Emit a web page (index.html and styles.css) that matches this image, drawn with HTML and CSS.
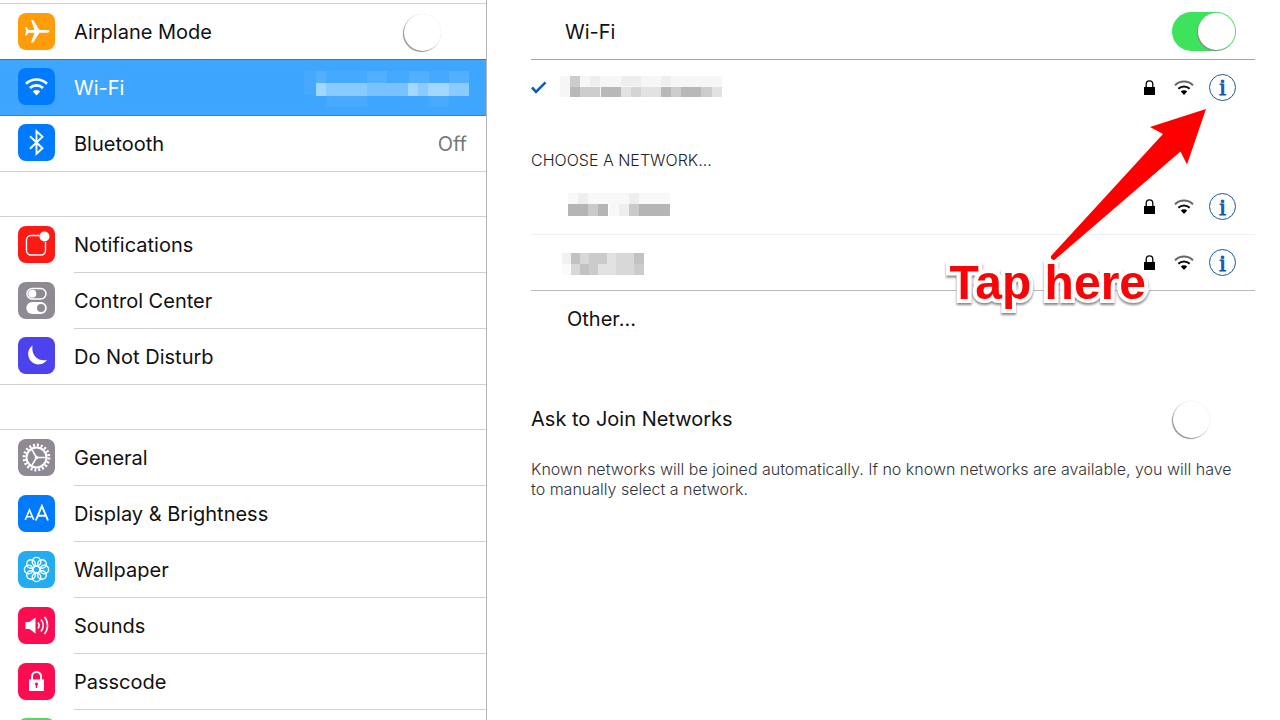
FILE: index.html
```html
<!DOCTYPE html>
<html lang="en">
<head>
<meta charset="utf-8">
<title>Settings</title>
<link rel="stylesheet" href="styles.css">
</head>
<body>
<div class="settings">
  <nav class="sidebar" aria-label="Settings">
    <div class="group">
      <div class="item">
        <svg class="icon orange" viewBox="0 0 37 37" aria-hidden="true"><path fill="#fff" d="M31.500 18.300c0 .9-1 1.400-2.500 1.400h-7.500l-6.300 9.800h-2.100l3.300-9.800h-5.700l-2.300 2.800H7.200l1-4.200-1-4.200h1.200l2.300 2.800h5.700l-3.300-9.800h2.100l6.300 9.800H29c1.500 0 2.500.5 2.500 1.400z"/></svg>
        <div class="item-body"><label for="airplane">Airplane Mode</label><input class="switch" type="checkbox" id="airplane"></div>
      </div>
      <a class="item selected" href="#wifi">
        <svg class="icon blue" viewBox="0 0 37 37" aria-hidden="true"><g fill="none" stroke="#fff" stroke-width="2.600"><path d="M8 15.800a15 15 0 0 1 21 0"/><path d="M12 20a9.300 9.300 0 0 1 13 0"/></g><path fill="#fff" d="M18.500 27.500l-3.700-4.100a5.400 5.400 0 0 1 7.400 0z"/></svg>
        <span class="item-body">Wi-Fi
          <svg class="mosaic-side" viewBox="0 0 165 40" aria-hidden="true"><path fill="#4eafff" d="M0 3h165v24H0z" opacity=".4"/><path fill="#61b8ff" d="M12 3h10v12H12zM63 3h20v12H63zM105 3h20v12h-20zM145 3h20v12h-20z" opacity=".5"/><path fill="#50adff" d="M22 27h41v12H22zM125 27h20v12h-20z" opacity=".6"/><path fill="#89cbff" d="M12 15h153v13H12z"/><path fill="#a2d7ff" d="M12 15h10v13H12zM104 15h10v13h-10zM124 15h21v13h-21z"/><path fill="#78c2ff" d="M63 15h41v13H63z"/></svg>
        </span>
      </a>
      <a class="item" href="#bluetooth">
        <svg class="icon blue" viewBox="0 0 37 37" aria-hidden="true"><path fill="none" stroke="#fff" stroke-width="1.900" d="M12 12.200l12.500 12.100-6 5.500V7.200l6 5.500L12 24.800"/></svg>
        <span class="item-body">Bluetooth<span class="value">Off</span></span>
      </a>
    </div>
    <div class="group">
      <a class="item" href="#notifications">
        <svg class="icon red" viewBox="0 0 37 37" aria-hidden="true"><path fill="none" stroke="#fff" stroke-width="1.400" d="M21.500 9.500H13a4.500 4.500 0 0 0-4.500 4.500V24.500A4.500 4.500 0 0 0 13 29h10a4.500 4.500 0 0 0 4.500-4.500V16"/><circle cx="26.500" cy="10.500" r="5" fill="#fff"/></svg>
        <span class="item-body">Notifications</span>
      </a>
      <a class="item" href="#control">
        <svg class="icon gray" viewBox="0 0 37 37" aria-hidden="true"><rect x="9" y="6.500" width="19" height="10.500" rx="5.250" fill="none" stroke="#fff" stroke-width="1.500"/><circle cx="14.300" cy="11.700" r="4" fill="#fff"/><rect x="8.300" y="20" width="20.500" height="12" rx="6" fill="#fff"/><circle cx="23" cy="26" r="4" fill="#8e8992"/></svg>
        <span class="item-body">Control Center</span>
      </a>
      <a class="item" href="#dnd">
        <svg class="icon indigo" viewBox="0 0 37 37" aria-hidden="true"><path fill="#fff" d="M14.500 8.500c-1.500 9 5 16.500 14.500 14.500A10.400 10.400 0 1 1 14.500 8.500z"/></svg>
        <span class="item-body">Do Not Disturb</span>
      </a>
    </div>
    <div class="group">
      <a class="item" href="#general">
        <svg class="icon gray" viewBox="0 0 37 37" aria-hidden="true"><g fill="none" stroke="#fff"><circle cx="18.500" cy="18.500" r="10" stroke-width="2"/><circle cx="18.500" cy="18.500" r="12.400" stroke-width="3" stroke-dasharray="2 1.895"/><path stroke-width="1.600" d="M18.500 18.500h10M18.500 18.500l-5-8.600M18.500 18.500l-5 8.600"/></g><circle cx="18.500" cy="18.500" r="1.800" fill="#fff"/></svg>
        <span class="item-body">General</span>
      </a>
      <a class="item" href="#display">
        <svg class="icon blue" viewBox="0 0 37 37" aria-hidden="true"><g fill="none" stroke="#fff" stroke-width="1.900"><path d="M7.200 25l4.300-10 4.300 10M8.700 21.700h5.600" stroke-width="1.600"/><path d="M17.800 25.500l6.100-14.500L30 25.500M20 20.800h7.800"/></g></svg>
        <span class="item-body">Display &amp; Brightness</span>
      </a>
      <a class="item" href="#wallpaper">
        <svg class="icon cyan" viewBox="0 0 37 37" aria-hidden="true"><g fill="none" stroke="#fff" stroke-width="1.400"><circle cx="18.500" cy="10.700" r="4.300"/><circle cx="24" cy="13" r="4.300"/><circle cx="26.300" cy="18.500" r="4.300"/><circle cx="24" cy="24" r="4.300"/><circle cx="18.500" cy="26.300" r="4.300"/><circle cx="13" cy="24" r="4.300"/><circle cx="10.700" cy="18.500" r="4.300"/><circle cx="13" cy="13" r="4.300"/><circle cx="18.500" cy="18.500" r="3.400"/></g></svg>
        <span class="item-body">Wallpaper</span>
      </a>
      <a class="item" href="#sounds">
        <svg class="icon pink" viewBox="0 0 37 37" aria-hidden="true"><path fill="#fff" d="M7.500 15h4l6-4.500v16l-6-4.500h-4z"/><g fill="none" stroke="#fff" stroke-width="1.600"><path d="M20 15.500a5 5 0 0 1 0 6"/><path d="M23 12.500a9.300 9.300 0 0 1 0 12"/><path d="M26.500 10a13.500 13.500 0 0 1 0 17"/></g></svg>
        <span class="item-body">Sounds</span>
      </a>
      <a class="item" href="#passcode">
        <svg class="icon pink" viewBox="0 0 37 37" aria-hidden="true"><path fill="#fff" fill-rule="evenodd" d="M11 16.500h15V28H11zM18.500 19.500a1.600 1.600 0 0 0-.7 3V25h1.400v-2.500a1.600 1.600 0 0 0-.7-3z"/><path fill="none" stroke="#fff" stroke-width="2" d="M14 17v-3.500a4.500 4.500 0 0 1 9 0V17"/></svg>
        <span class="item-body">Passcode</span>
      </a>
      <a class="item" href="#more" aria-label="More">
        <svg class="icon green" viewBox="0 0 37 37" aria-hidden="true"></svg>
        <span class="item-body"></span>
      </a>
    </div>
  </nav>

  <main class="detail" id="wifi">
    <div class="row power"><label for="wifi-power">Wi-Fi</label><input class="switch" type="checkbox" id="wifi-power" checked></div>
    <div class="row current">
      <svg class="check" viewBox="0 0 16 13" aria-hidden="true"><path fill="none" stroke="#0c5cb5" stroke-width="2.600" d="M1 6.500l4 4.300L14.500 1.300"/></svg>
      <svg class="mosaic" viewBox="0 0 164 28" aria-hidden="true"><path fill="#f6f6f6" d="M0 3h162v21H0z"/><path fill="#eee" d="M30 3h10v10H30zM61 3h20v10H61zM101 3h10v10h-10z"/><path fill="#ccc" d="M10 3h10v21H10zM20 14h20v10H20zM91 14h71v10H91z"/><path fill="#b8b8b8" d="M10 14h10v10H10zM41 14h20v10H41zM101 14h10v10h-10zM121 14h20v10h-20z"/><path fill="#e2e2e2" d="M61 14h10v10H61zM81 14h20v10H81zM152 14h10v10h-10z"/><path fill="#d4d4d4" d="M71 14h10v10H71z"/></svg>
      <svg class="lock" viewBox="0 0 11 15" aria-hidden="true"><path d="M0 7h11v8H0z"/><path fill="none" stroke="#000" stroke-width="1.300" d="M2.200 7V4.200a3.300 3.300 0 0 1 6.600 0V7"/></svg>
      <svg class="signal" viewBox="0 0 20 15" aria-hidden="true"><g fill="none" stroke-width="2"><path stroke="#666" d="M1 5.200a13 13 0 0 1 18 0"/><path stroke="#111" d="M4.300 8.700a8.200 8.200 0 0 1 11.400 0"/></g><path d="M10 15l-3.200-3.500a4.600 4.600 0 0 1 6.400 0z"/></svg>
      <button class="info" aria-label="Network details">i</button>
    </div>

    <h2 class="heading">CHOOSE A NETWORK...</h2>
    <div class="row network">
      <svg class="mosaic" viewBox="0 0 164 28" aria-hidden="true"><path fill="#f8f8f8" d="M9 0h102v11H9zM50 11h20v12H50z"/><path fill="#eee" d="M19 0h10v11H19zM70 0h10v11H70zM60 11h10v12H60z"/><path fill="#b5b5b5" d="M9 11h20v12H9zM39 11h10v12H39zM80 11h31v12H80z"/><path fill="#cacaca" d="M29 11h10v12H29zM70 11h10v12H70z"/></svg>
      <svg class="lock" viewBox="0 0 11 15" aria-hidden="true"><path d="M0 7h11v8H0z"/><path fill="none" stroke="#000" stroke-width="1.300" d="M2.200 7V4.200a3.300 3.300 0 0 1 6.600 0V7"/></svg>
      <svg class="signal" viewBox="0 0 20 15" aria-hidden="true"><g fill="none" stroke-width="2"><path stroke="#666" d="M1 5.200a13 13 0 0 1 18 0"/><path stroke="#111" d="M4.300 8.700a8.200 8.200 0 0 1 11.400 0"/></g><path d="M10 15l-3.200-3.500a4.600 4.600 0 0 1 6.400 0z"/></svg>
      <button class="info" aria-label="Network details">i</button>
    </div>
    <div class="row network ruled">
      <svg class="mosaic" viewBox="0 0 164 28" aria-hidden="true"><path fill="#f1f1f1" d="M3 4h9v11H3z"/><path fill="#fafafa" d="M3 15h9v11H3z"/><path fill="#d8d8d8" d="M12 4h73v22H12z"/><path fill="#c2c2c2" d="M12 4h9v11h-9zM21 15h9v11h-9zM75 4h10v11H75z"/><path fill="#cbcbcb" d="M30 4h18v11H30zM30 15h9v11h-9zM75 15h10v11H75z"/><path fill="#e2e2e2" d="M39 15h18v11H39zM48 4h9v11h-9z"/></svg>
      <svg class="lock" viewBox="0 0 11 15" aria-hidden="true"><path d="M0 7h11v8H0z"/><path fill="none" stroke="#000" stroke-width="1.300" d="M2.200 7V4.200a3.300 3.300 0 0 1 6.600 0V7"/></svg>
      <svg class="signal" viewBox="0 0 20 15" aria-hidden="true"><g fill="none" stroke-width="2"><path stroke="#666" d="M1 5.200a13 13 0 0 1 18 0"/><path stroke="#111" d="M4.300 8.700a8.200 8.200 0 0 1 11.400 0"/></g><path d="M10 15l-3.200-3.500a4.600 4.600 0 0 1 6.400 0z"/></svg>
      <button class="info" aria-label="Network details">i</button>
    </div>
    <a class="row other" href="#other">Other...</a>

    <div class="row ask"><label for="ask">Ask to Join Networks</label><input class="switch" type="checkbox" id="ask"></div>
    <p class="note">Known networks will be joined automatically. If no known networks are available, you will have to manually select a network.</p>

    <svg class="arrow" viewBox="1040 100 170 165" aria-hidden="true"><path fill="#fe0000" d="M1206 109l-56 18 13 7-111.500 121.500a2.700 2.700 0 0 0 4 3.600L1180.500 151.500l6.500 13z"/></svg>
    <strong class="callout">Tap here</strong>
  </main>
</div>
</body>
</html>
```
FILE: styles.css
```css
* { box-sizing: border-box; }

body {
  margin: 0;
  background: #fff;
  color: #111;
  font-family: Inter, "Liberation Sans", sans-serif;
  font-size: 20px;
  line-height: 28px;
}

a { color: inherit; text-decoration: none; }

.settings {
  display: flex;
  height: 100vh;
  overflow: hidden;
}

.sidebar {
  flex: 0 0 38.05%;
  padding-top: 3px;
  border-right: 1px solid #b4b4b8;
  overflow: hidden;
}

.group {
  margin-bottom: 44px;
  border-top: 1px solid #d2d2d4;
}

.item {
  display: flex;
  align-items: center;
  gap: 19px;
  height: 56px;
  padding-left: 18px;
}

.item:last-child { border-bottom: 1px solid #d2d2d4; }

.item-body {
  flex: 1;
  display: flex;
  align-items: center;
  justify-content: space-between;
  height: 100%;
  padding-right: 19px;
  border-bottom: 1px solid #d2d2d4;
}

.item:last-child .item-body,
.item:first-child:has(+ .selected) .item-body { border-bottom: 0; }

.selected {
  background: #3ea6ff;
  border-top: 1px solid #3578b8;
  border-bottom: 1px solid #4080bd;
  height: 57px;
  margin-top: -1px;
  color: #fff;
}

.selected .item-body { border-bottom: 0; padding-right: 17px; }
.value { color: #77777b; }

.icon {
  flex: none;
  width: 37px;
  height: 37px;
  margin-bottom: 2px;
  border-radius: 8px;
}

.orange { background: #ff9c0a; }
.blue { background: #007aff; }
.red { background: #fc1a14; }
.gray { background: #8e8992; }
.indigo { background: #4c43ef; }
.cyan { background: #22adf0; }
.pink { background: #fc0d51; }
.green { background: #4cd964; }

.mosaic-side { width: 165px; height: 40px; }

.switch {
  appearance: none;
  flex: none;
  display: flex;
  width: 64px;
  height: 39px;
  margin: 0;
  padding: 1px;
  border-radius: 20px;
}

.switch::before {
  content: "";
  width: 37px;
  height: 37px;
  border-radius: 50%;
  background: #fff;
  box-shadow: -1px 1px 1px #8a8a8e, 0 0 1px #ddd;
}

.switch:checked {
  justify-content: flex-end;
  background: #3ee35c;
}

.detail {
  position: relative;
  flex: 1;
  padding: 4px 25px 0 44px;
}

.row {
  display: flex;
  align-items: center;
  height: 56px;
  padding-right: 19px;
}

.power {
  justify-content: space-between;
  padding-left: 34px;
  border-bottom: 1px solid #a4a4a6;
}

.current { padding-bottom: 2px; }

.check { width: 16px; height: 13px; margin-right: 13px; }
.mosaic { width: 164px; height: 28px; margin-right: auto; }
.network .mosaic { margin-left: 28px; }
.lock { width: 11px; height: 15px; margin-right: 19px; }
.signal { width: 20px; height: 15px; margin-right: 15px; }

.info {
  width: 27px;
  height: 27px;
  padding: 0;
  border: 1px solid #1c5797;
  border-radius: 50%;
  background: none;
  color: #1559a6;
  font: 24px/24px "Liberation Serif", serif;
  -webkit-text-stroke: 1px #1559a6;
}

.heading {
  margin: 30px 0 5px;
  color: #222226;
  font-size: 16px;
  font-weight: 300;
}

.network { border-bottom: 1px solid #f0f0f0; }
.ruled { border-bottom-color: #b8b8ba; }
.other { padding-left: 36px; }
.ask { justify-content: space-between; margin-top: 44px; }

.note {
  margin: 12px 0 0;
  padding-right: 16px;
  color: #33333b;
  font-size: 16px;
  font-weight: 300;
  line-height: 20px;
}

.arrow {
  position: absolute;
  top: 100px;
  right: 70px;
  width: 170px;
  height: 165px;
}

.callout {
  position: absolute;
  top: 255px;
  right: 134px;
  color: #f80406;
  font: bold 48px/56px "Liberation Sans", Arial, sans-serif;
  white-space: nowrap;
  -webkit-text-stroke: 8px #fff;
  paint-order: stroke fill;
  stroke-linejoin: round;
  filter: drop-shadow(0 2px 1px #888);
}
```
